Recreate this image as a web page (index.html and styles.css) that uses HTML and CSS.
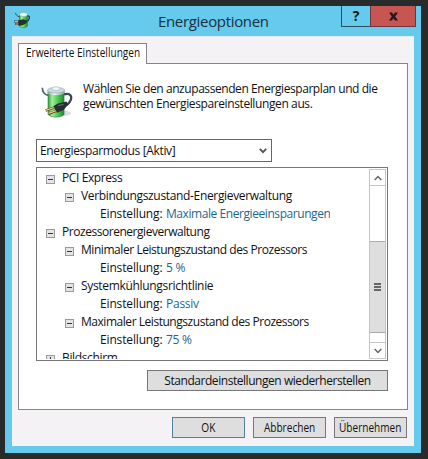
FILE: index.html
```html
<!DOCTYPE html>
<html lang="de">
<head>
<meta charset="utf-8">
<title>Energieoptionen</title>
<link rel="stylesheet" href="styles.css">
</head>
<body>
<svg width="0" height="0" class="defs" aria-hidden="true">
  <defs>
    <linearGradient id="cell"><stop offset="0" stop-color="#2d9a3c"/><stop offset=".25" stop-color="#9ff09a"/><stop offset=".6" stop-color="#4fcb52"/><stop offset="1" stop-color="#1c8a32"/></linearGradient>
    <linearGradient id="cap"><stop offset="0" stop-color="#8fa3a8"/><stop offset=".4" stop-color="#f2f8f8"/><stop offset="1" stop-color="#8d9fa4"/></linearGradient>
    <symbol id="battery" viewBox="0 0 34 36">
      <ellipse cx="22" cy="30" rx="10" ry="3" fill="#aaa" opacity=".4"/>
      <path d="M1.500 3c0 4 1.500 7 6 8" fill="none" stroke="#56646c" stroke-width="1.800"/>
      <path d="M7.500 7v24c2 4 15 4 17 0V7z" fill="url(#cell)" stroke="#277b37" stroke-width=".6"/>
      <path d="M7 5.500v3c2 3 16 3 18 0v-3z" fill="url(#cap)"/>
      <ellipse cx="16" cy="5.500" rx="9" ry="3" fill="#c9dcdf" stroke="#8ca0a6" stroke-width=".6"/>
      <ellipse cx="16" cy="3.800" rx="4" ry="2" fill="#eff9fb" stroke="#91a8ad" stroke-width=".5"/>
      <path d="M24.500 10c7-2 8.500 2 7 6s-4 5-6 6" fill="none" stroke="#3b4654" stroke-width="2.400"/>
      <path d="M13 22.500l5-3 9-2 2 3-5 6-7 3z" fill="#282d36"/>
      <path d="M18 22l6-1.500" stroke="#6d747c" stroke-width="1"/>
      <path d="M14 24l-9 3M16 27.500l-8 3" stroke="#5d4620" stroke-width="2.600"/>
      <path d="M14 23.800l-9 3M16 27.300l-8 2.800" stroke="#edcf87" stroke-width="1.300"/>
    </symbol>
  </defs>
</svg>
<div class="window">
  <header class="titlebar">
    <svg class="app-icon" viewBox="0 0 16 16">
      <path d="M1.500 1c.5 2 1.500 3 4 4" fill="none" stroke="#31505c" stroke-width="1"/>
      <path d="M5.500 2.500V14c1 2 7 2 8 0V2.500z" fill="url(#cell)" stroke="#277b37" stroke-width=".5"/>
      <ellipse cx="9.500" cy="2.500" rx="4" ry="2" fill="#e8f6f6" stroke="#7c9da4" stroke-width=".5"/>
      <path d="M13.500 4c3-.5 2.500 4-1.500 6" fill="none" stroke="#2b3f49" stroke-width="1.400"/>
      <path d="M4 8.500l5-1.300 4 1.300-1 3-4 2H4z" fill="#24312d"/>
      <path d="M5 9.500H0M5 12H1" stroke="#4d4527" stroke-width="1.800"/>
      <path d="M4 9.500H.5M4 12H1.500" stroke="#e6d79a" stroke-width=".8"/>
    </svg>
    <h1 class="title">Energieoptionen</h1>
    <div class="controls">
      <button class="control help">?</button>
      <button class="control close"><svg width="9" height="9" viewBox="0 0 9 9"><path d="M0 .5h3l1.500 2.200L6 .5h3L6.200 4.400 9 8.500H6L4.500 6.200 3 8.500H0l2.800-4.100z" fill="#20181c"/></svg></button>
    </div>
  </header>
  <main class="client">
    <div class="tab"><span class="tab-label">Erweiterte Einstellungen</span></div>
    <section class="panel">
      <div class="intro">
        <svg class="intro-icon"><use href="#battery"/></svg>
        <p><span class="line-a">Wählen Sie den anzupassenden Energiesparplan und die</span><br><span class="line-b">gewünschten Energiespareinstellungen aus.</span></p>
      </div>
      <div class="combo"><span class="plan">Energiesparmodus [Aktiv]</span><svg width="8" height="6" viewBox="0 0 8 6"><path d="M.8.8 4 4.200 7.200.8" fill="none" stroke="#555" stroke-width="1.900"/></svg></div>
      <div class="list">
        <div class="tree">
          <div class="row"><i class="toggle"></i><span class="pci">PCI Express</span></div>
          <div class="row sub"><i class="toggle"></i><span class="link-state">Verbindungszustand-Energieverwaltung</span></div>
          <div class="row setting"><span class="key">Einstellung:</span><span class="value savings">Maximale Energieeinsparungen</span></div>
          <div class="row"><i class="toggle"></i><span class="processor">Prozessorenergieverwaltung</span></div>
          <div class="row sub"><i class="toggle"></i><span class="minimum">Minimaler Leistungszustand des Prozessors</span></div>
          <div class="row setting"><span class="key">Einstellung:</span><span class="value">5 %</span></div>
          <div class="row sub"><i class="toggle"></i><span class="cooling">Systemkühlungsrichtlinie</span></div>
          <div class="row setting"><span class="key">Einstellung:</span><span class="value">Passiv</span></div>
          <div class="row sub"><i class="toggle"></i><span class="maximum">Maximaler Leistungszustand des Prozessors</span></div>
          <div class="row setting"><span class="key">Einstellung:</span><span class="value">75 %</span></div>
          <div class="row"><i class="toggle plus"></i><span class="display">Bildschirm</span></div>
        </div>
        <div class="scrollbar">
          <div class="arrow up"><svg width="8" height="6" viewBox="0 0 8 6"><path d="M.7 5 4 1.500 7.300 5" fill="none" stroke="#666" stroke-width="1.500"/></svg></div>
          <div class="thumb"><i></i><i></i><i></i></div>
          <div class="arrow down"><svg width="8" height="6" viewBox="0 0 8 6"><path d="M.7 1 4 4.500 7.300 1" fill="none" stroke="#666" stroke-width="1.500"/></svg></div>
        </div>
      </div>
      <button class="button restore"><span>Standardeinstellungen wiederherstellen</span></button>
    </section>
    <footer class="actions">
      <button class="button ok"><span>OK</span></button>
      <button class="button cancel"><span>Abbrechen</span></button>
      <button class="button apply"><span>Übernehmen</span></button>
    </footer>
  </main>
</div>
</body>
</html>
```
FILE: styles.css
```css
* { box-sizing: border-box; }
body {
  margin: 0;
  width: 428px;
  height: 459px;
  padding: 6px 7px 6px 5px;
  overflow: hidden;
  background: #272b2c;
  font: 12px/15px "Open Sans", "Noto Sans", sans-serif;
  color: #111;
}
.defs { position: absolute; }
span { white-space: nowrap; }
button { font: inherit; color: inherit; padding: 0; }
.window { width: 416px; height: 447px; background: #65caec; padding: 0 7px 7px; }
.titlebar { height: 30px; display: flex; margin-right: -2px; }
.app-icon { flex: none; width: 16px; height: 16px; margin: 6px 1px 0 2px; }
.title { width: 111px; margin: 5px 72px 0 127px; font-size: 15px; line-height: 20px; font-weight: 400; color: #18313d; white-space: nowrap; letter-spacing: -.33px; }
.controls { display: flex; height: 21px; }
.control { display: grid; place-items: center; border: 1px solid #285064; border-top: 0; height: 21px; }
.help { width: 29px; background: #65caec; font-size: 14px; line-height: 16px; font-weight: 700; border-right: 0; }
.close { width: 46px; background: #c75552; border-color: #693744; }
.client { height: 410px; background: #f5f2f5; border-top: 1px solid #e2eaf0; padding: 6px 6px 0; }
.tab { position: relative; z-index: 1; width: 129px; height: 21px; background: #fff; border: 1px solid #85858b; border-bottom: 0; padding: 1px 0 0 7px; }
.tab-label { display: inline-block; transform: scaleX(.84); transform-origin: left; }
.panel { width: 390px; height: 347px; margin-top: -1px; background: #fff; border: 1px solid #85858b; padding: 16px 19px 0 17px; }
.intro { display: flex; height: 59px; }
.intro-icon { flex: none; width: 34px; height: 34px; margin: 5px 0 0 4px; }
.intro p { margin: 1px 0 0 9px; line-height: 15px; }
.line-a { letter-spacing: -.43px; }
.line-b { letter-spacing: -.39px; }
.combo { width: 236px; height: 23px; border: 1px solid #66666a; display: flex; align-items: center; justify-content: space-between; padding: 0 4px 0 3px; }
.plan { letter-spacing: -.34px; }
.list { height: 194px; margin: 5px 0 9px; width: 352px; border: 1px solid #77777b; padding: 1px; display: flex; justify-content: space-between; }
.tree { height: 190px; overflow: hidden; }
.row { height: 18px; display: flex; align-items: center; padding-left: 8px; line-height: 18px; }
.sub { padding-left: 27px; }
.setting { padding-left: 62px; }
.toggle { width: 9px; height: 9px; margin: 3px 7px 0 0; border: 1px solid #9a9a9a; background: linear-gradient(#333, #333) center / 5px 1px no-repeat #e4e4e4; }
.plus { background: linear-gradient(#333, #333) center / 5px 1px no-repeat, linear-gradient(#333, #333) center / 1px 5px no-repeat #e4e4e4; }
.key { width: 66px; letter-spacing: -.15px; }
.value { color: #1c6790; letter-spacing: -.25px; }
.savings { letter-spacing: -.43px; }
.pci { letter-spacing: -.4px; }
.link-state { letter-spacing: -.34px; }
.processor { letter-spacing: -.46px; }
.minimum { letter-spacing: -.44px; }
.cooling { letter-spacing: -.32px; }
.maximum { letter-spacing: -.46px; }
.display { letter-spacing: -.35px; }
.scrollbar { width: 17px; height: 190px; display: flex; flex-direction: column; border: 1px solid #c5c5c8; }
.arrow { height: 16px; display: grid; place-items: center; }
.up { border-bottom: 1px solid #c5c5c8; }
.down { margin-top: 9px; border-top: 1px solid #c5c5c8; }
.thumb { height: 92px; margin-top: 55px; background: #dedede; border: solid #a9a9ac; border-width: 1px 0; display: flex; flex-direction: column; align-items: center; justify-content: center; gap: 1px; }
.thumb i { width: 7px; height: 2px; background: #66666a; }
.button { display: flex; align-items: center; justify-content: center; height: 21px; background: #dedede; border: 1px solid #77777b; }
.restore { width: 241px; margin-left: auto; letter-spacing: -.45px; }
.actions { display: flex; justify-content: flex-end; gap: 8px; margin: 7px 1px 0 0; }
.actions .button { width: 73px; }
.actions span { transform: scaleX(.84); }
.actions .ok { border-color: #547f9c; }
```
